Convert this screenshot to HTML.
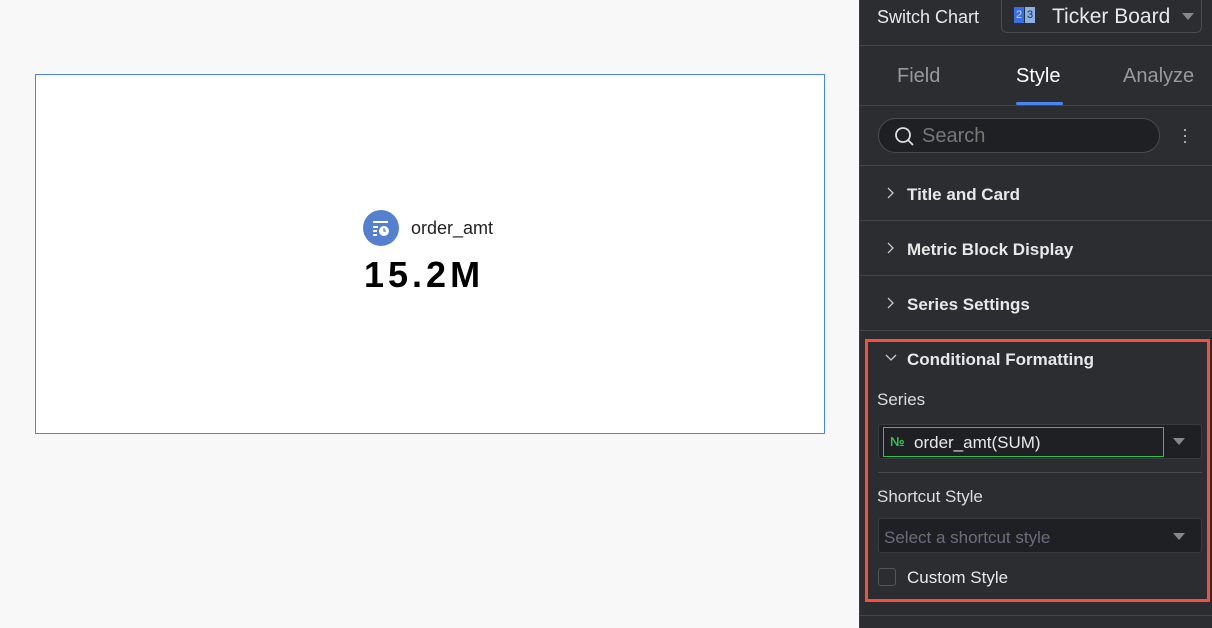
<!DOCTYPE html><html><head><style>
*{box-sizing:border-box;margin:0;padding:0}
body{width:1212px;height:628px;position:relative;background:#f8f8f8;font-family:"Liberation Sans",sans-serif;overflow:hidden}
.a{position:absolute}
.p{left:859px;top:0;width:353px;height:628px;background:#2c2d31;border-left:1px solid #3d3e43}
.t{color:#e8e8e8}
.line{height:1px;background:#45464b;left:0;width:353px}
</style></head><body>
<div class="a" style="left:35px;top:74px;width:790px;height:360px;background:#fff;border:1px solid #4a86f0"></div>
<div class="a" style="left:363px;top:210px;width:36px;height:36px;border-radius:50%;background:#5580d0">
<svg width="36" height="36"><g fill="#fff"><rect x="10" y="11" width="15" height="2"/><rect x="10" y="16" width="5" height="2"/><rect x="10" y="20" width="4" height="2"/><rect x="10" y="24" width="4" height="2"/><circle cx="21" cy="21" r="5"/></g><path d="M21 18v3h2" stroke="#5580d0" stroke-width="1.3" fill="none"/></svg></div>
<div class="a" style="left:411px;top:218px;font-size:18px;color:#222">order_amt</div>
<div class="a" style="left:364px;top:254px;font-size:36px;font-weight:bold;color:#000;letter-spacing:4px">15.2M</div>
<div class="a p">
<div class="a t" style="left:17px;top:7px;font-size:18px">Switch Chart</div>
<div class="a" style="left:141px;top:0;width:201px;height:33px;border:1px solid #4a4b50;border-top:none;border-radius:0 0 6px 6px"></div>
<div class="a" style="left:154px;top:7px;width:10px;height:16px;background:#3a6ee8;font-size:11px;color:#cde;text-align:center;line-height:16px">2</div>
<div class="a" style="left:165px;top:7px;width:10px;height:16px;background:#8bb0e8;font-size:11px;color:#234;text-align:center;line-height:16px">3</div>
<div class="a t" style="left:192px;top:5px;font-size:21px">Ticker Board</div>
<div class="a" style="left:322px;top:13px;border:6px solid transparent;border-top:7px solid #888"></div>
<div class="a line" style="top:45px"></div>
<div class="a" style="left:37px;top:65px;font-size:20px;color:#999">Field</div>
<div class="a" style="left:156px;top:65px;font-size:20px;color:#fff">Style</div>
<div class="a" style="left:263px;top:65px;font-size:20px;color:#999">Analyze</div>
<div class="a" style="left:156px;top:102px;width:47px;height:3px;background:#4a86f0;border-radius:2px"></div>
<div class="a line" style="top:105px"></div>
<div class="a" style="left:18px;top:118px;width:282px;height:35px;border:1px solid #4a4b50;border-radius:18px;background:#1f2024"></div>
<svg class="a" style="left:34px;top:126px" width="22" height="22"><circle cx="9" cy="9" r="7" stroke="#ddd" stroke-width="1.8" fill="none"/><path d="M14 14l5 5" stroke="#ddd" stroke-width="1.8"/></svg>
<div class="a" style="left:62px;top:125px;font-size:20px;color:#777">Search</div>
<div class="a" style="left:322px;top:126px;color:#bbb;font-size:18px;line-height:6px;width:4px">·<br>·<br>·</div>
<div class="a line" style="top:165px"></div>
<svg class="a" style="left:26px;top:187px" width="8" height="12"><path d="M2 1l5 5-5 5" stroke="#ccc" stroke-width="1.3" fill="none"/></svg><div class="a t" style="left:47px;top:185px;font-size:17px;font-weight:bold">Title and Card</div>
<div class="a line" style="top:220px"></div>
<svg class="a" style="left:26px;top:242px" width="8" height="12"><path d="M2 1l5 5-5 5" stroke="#ccc" stroke-width="1.3" fill="none"/></svg><div class="a t" style="left:47px;top:240px;font-size:17px;font-weight:bold">Metric Block Display</div>
<div class="a line" style="top:275px"></div>
<svg class="a" style="left:26px;top:297px" width="8" height="12"><path d="M2 1l5 5-5 5" stroke="#ccc" stroke-width="1.3" fill="none"/></svg><div class="a t" style="left:47px;top:295px;font-size:17px;font-weight:bold">Series Settings</div>
<div class="a line" style="top:330px"></div>
<div class="a" style="left:5px;top:339px;width:345px;height:263px;border:3px solid #f5503f"></div>
<svg class="a" style="left:25px;top:354px" width="12" height="8"><path d="M1 1l5 5 5-5" stroke="#ccc" stroke-width="1.3" fill="none"/></svg>
<div class="a t" style="left:47px;top:350px;font-size:17px;font-weight:bold">Conditional Formatting</div>
<div class="a" style="left:17px;top:390px;font-size:17px;color:#ddd">Series</div>
<div class="a" style="left:18px;top:424px;width:324px;height:35px;background:#1f2024;border:1px solid #3a3b40;border-radius:3px"></div>
<div class="a" style="left:23px;top:427px;width:281px;height:30px;border:1px solid #30c050"></div>
<div class="a" style="left:30px;top:434px;font-size:13px;color:#30c050;font-weight:bold">№</div>
<div class="a t" style="left:54px;top:433px;font-size:17px">order_amt(SUM)</div>
<div class="a" style="left:313px;top:438px;border:6px solid transparent;border-top:7px solid #888"></div>
<div class="a" style="left:18px;top:472px;width:324px;height:1px;background:#4a4b50"></div>
<div class="a" style="left:17px;top:487px;font-size:17px;color:#ddd">Shortcut Style</div>
<div class="a" style="left:18px;top:518px;width:324px;height:35px;background:#1f2024;border:1px solid #3a3b40;border-radius:3px"></div>
<div class="a" style="left:24px;top:528px;font-size:17px;color:#6a6e7a">Select a shortcut style</div>
<div class="a" style="left:313px;top:533px;border:6px solid transparent;border-top:7px solid #888"></div>
<div class="a" style="left:18px;top:568px;width:18px;height:18px;border:1px solid #555;border-radius:3px"></div>
<div class="a t" style="left:47px;top:568px;font-size:17px">Custom Style</div>
<div class="a line" style="top:615px"></div>
</div>
</body></html>
